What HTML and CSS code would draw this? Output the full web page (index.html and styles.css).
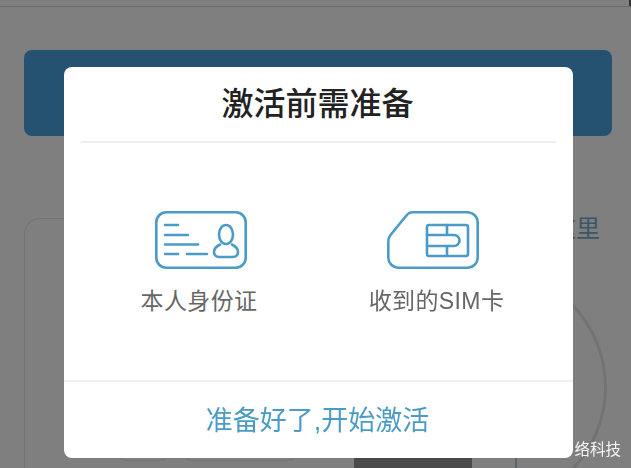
FILE: index.html
```html
<!DOCTYPE html>
<html lang="zh-CN">
<head>
    <meta charset="UTF-8">
    <meta name="viewport" content="width=device-width, initial-scale=1.0">
    <title>激活前需准备</title>
    <link rel="stylesheet" href="styles.css">
</head>
<body>
<div class="page">
    <div class="top-bar"><div class="top-mark"></div></div>
    <div class="banner"></div>
    <div class="content">
        <div class="card">
            <div class="card-foot">
                <div class="pill pill-small"></div>
                <div class="pill pill-wide"></div>
                <div class="dark-block"></div>
                <div class="foot-line"></div>
            </div>
        </div>
        <a class="here-link">这里</a>
        <div class="circle"></div>
    </div>
</div>

<div class="overlay">
    <div class="modal">
        <h2 class="modal-title">激活前需准备</h2>
        <div class="modal-items">
            <div class="item">
                <svg class="item-icon" width="92" height="58" viewBox="0 0 92 58" fill="none">
                    <rect x="1.300" y="1.300" width="89.400" height="55.400" rx="10"/>
                    <path d="M10 14H23M10 24H33M10 33.500H43M10 43H23M32 43H52"/>
                    <ellipse cx="71" cy="23.500" rx="7" ry="9.500"/>
                    <path d="M65 33.500C61 35.500 59 38 59 41C59 44 61 46 64 46H78C81 46 83 44 83 41C83 38 81 35.500 77 33.500"/>
                </svg>
                <div class="item-label label-id">本人身份证</div>
            </div>
            <div class="item">
                <svg class="item-icon" width="92" height="58" viewBox="0 0 92 58" fill="none">
                    <path d="M26 1.300H81A10 10 0 0 1 90.700 11V47A10 10 0 0 1 81 56.700H11A10 10 0 0 1 1.300 47V31C1.300 28 2 26 3.500 24L19 5C21 2.300 23 1.300 26 1.300Z"/>
                    <rect x="40" y="14" width="41" height="31" rx="2"/>
                    <path d="M40 24H67A5.500 5.500 0 0 1 67 35H40M60 14V24M60 35V45"/>
                </svg>
                <div class="item-label label-sim">收到的SIM卡</div>
            </div>
        </div>
        <div class="modal-action">准备好了,开始激活</div>
    </div>
</div>

<div class="watermark">络科技</div>
</body>
</html>
```

FILE: styles.css
```css
body {
    font-family: 'Liberation Sans', 'Noto Sans CJK SC', sans-serif;
    margin: 0;
    height: 100vh;
    overflow: hidden;
    background-color: #fff;
}

.page {
    height: 100vh;
    overflow: hidden;
}

.top-bar {
    display: flex;
    justify-content: flex-end;
    height: 6px;
    background-color: #fff;
    border-bottom: 1px solid #d0d0d0;
}

.top-mark {
    width: 2px;
    background-color: #666;
}

.banner {
    height: 86px;
    margin: 43px 19px 0 24px;
    background-color: #4ca4e4;
    border-radius: 8px;
}

.content {
    display: flex;
    position: relative;
    margin: 82px 0 0 24px;
}

.card {
    width: 526px;
    height: 300px;
    box-sizing: border-box;
    border: 1px solid #e6e6e6;
    border-right: none;
    border-radius: 16px 0 0 0;
}

.card-foot {
    display: flex;
    align-items: flex-start;
    margin-top: 231px;
    padding-left: 93px;
}

.pill {
    height: 11px;
    box-sizing: border-box;
    border: 1px solid #e6e6e6;
    border-top: none;
    border-radius: 0 0 8px 8px;
}

.pill-small {
    width: 50px;
}

.pill-wide {
    width: 112px;
    margin-left: 16px;
}

.dark-block {
    position: relative;
    z-index: 1;
    width: 118px;
    height: 30px;
    margin-left: 58px;
    background-color: #949494;
}

.foot-line {
    position: relative;
    z-index: 1;
    width: 2px;
    height: 30px;
    margin-left: 43px;
    background-color: #b4c8d6;
}

.here-link {
    margin: -4px 0 0 2px;
    font-size: 24px;
    line-height: 30px;
    color: #74aecf;
}

.circle {
    position: absolute;
    left: 343px;
    top: 49px;
    width: 240px;
    height: 240px;
    box-sizing: border-box;
    border: 3px solid #e6e6e6;
    border-radius: 50%;
}

.overlay {
    position: fixed;
    top: 0;
    left: 0;
    right: 0;
    bottom: 0;
    z-index: 2;
    display: flex;
    align-items: flex-start;
    padding: 67px 0 0 64px;
    background-color: rgba(0, 0, 0, 0.5);
}

.modal {
    display: flex;
    flex-direction: column;
    width: 509px;
    height: 391px;
    background-color: #fff;
    border-radius: 8px;
}

.modal-title {
    height: 76px;
    margin: 0 17px;
    padding-right: 2px;
    box-sizing: border-box;
    border-bottom: 2px solid #eee;
    font-size: 32px;
    font-weight: 500;
    line-height: 74px;
    text-align: center;
    color: #222;
}

.modal-items {
    display: flex;
    flex: 1;
    justify-content: center;
    padding: 68px 3px 0 0;
}

.item {
    width: 232px;
    text-align: center;
}

.item-icon {
    display: block;
    margin: 0 auto;
    stroke: #4a9cc7;
    stroke-width: 2.600;
    stroke-linecap: round;
}

.item-label {
    margin-top: 16px;
    font-size: 23px;
    letter-spacing: 0.400px;
    line-height: 32px;
    color: #666;
}

.label-id {
    padding-right: 4px;
}

.label-sim {
    padding-left: 7px;
}

.modal-action {
    height: 76px;
    padding-right: 2px;
    border-top: 2px solid #f0f0f0;
    font-size: 27px;
    line-height: 78px;
    text-align: center;
    color: #4a9cc7;
}

.watermark {
    position: absolute;
    z-index: 3;
    right: 10px;
    top: 439px;
    font-size: 15.500px;
    line-height: 22px;
    color: #f4f4f4;
}
```
